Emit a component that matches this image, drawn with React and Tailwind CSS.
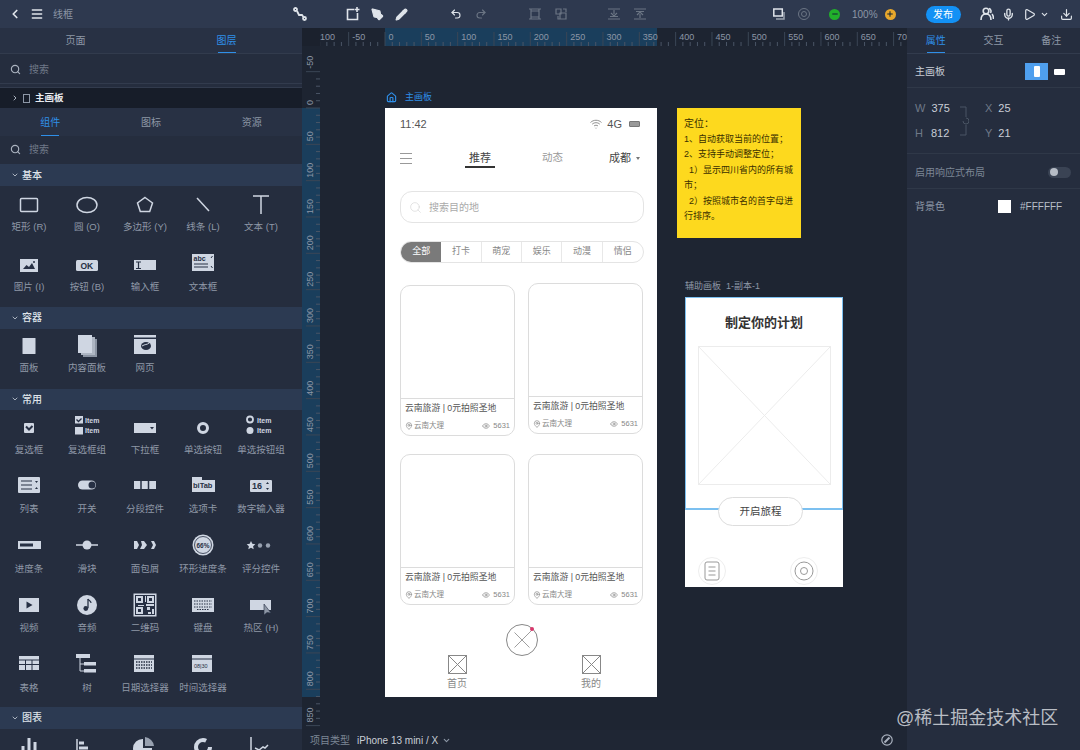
import { ChevronLeft, ChevronDown, ChevronRight, Menu, Search, Undo2, Redo2, PenTool, Pencil, Play, Mic, Download, Minus, Plus, Home, MapPin, Eye } from 'lucide-react';

const font = { fontFamily: '"Liberation Sans", "Noto Sans CJK SC", sans-serif' };
const C = '#cfd6e2';
const D = '#273044';
const rulerText = '#8c96a6';

function G({ children }) {
  return <svg width="36" height="24" viewBox="0 0 36 24" fill="none" className="overflow-visible">{children}</svg>;
}
const T = ({ x, y, s = 7, c = D, children }) => (
  <text x={x} y={y} fontSize={s} fontWeight="700" fill={c} fontFamily="Liberation Sans">{children}</text>
);

const icons = {
  rect: <G><rect x="9.500" y="5.500" width="17" height="13" rx="1" stroke={C} strokeWidth="1.500" /></G>,
  oval: <G><ellipse cx="18" cy="12" rx="10" ry="7.500" stroke={C} strokeWidth="1.500" /></G>,
  poly: <G><path d="M18 4.500l7.500 5.500-2.800 8.500h-9.400L10.500 10z" stroke={C} strokeWidth="1.500" /></G>,
  line: <G><path d="M12 5l12 13" stroke={C} strokeWidth="1.500" /></G>,
  text: <G><path d="M10 3h16M18 3v18" stroke={C} strokeWidth="1.500" /></G>,
  img: <G><rect x="9" y="6" width="18" height="13" fill={C} /><path d="M12 16l3.500-4 2.500 2 3-4 3 6z" fill={D} /><circle cx="23" cy="9" r="1" fill={D} /></G>,
  btn: <G><rect x="7" y="7" width="22" height="11" rx="1.500" fill={C} /><T x="11.500" y="15.500" s={8.500}>OK</T></G>,
  input: <G><rect x="7" y="7" width="22" height="10" fill={C} /><path d="M9 9h5M9 15.500h5M11.500 9v6.500" stroke={D} strokeWidth="1.200" /></G>,
  area: <G><rect x="7" y="1" width="22" height="17" fill={C} /><T x="8.500" y="8" s={7}>abc</T><path d="M9 11h14M9 14h14" stroke={D} /><path d="M26 5l1.500-2M26 13l1.500 2" stroke={D} /></G>,
  panel: <G><rect x="11.500" y="4" width="13" height="16" rx="0.500" fill={C} /></G>,
  content: <G><rect x="14" y="5" width="14" height="18" fill="#8b94a3" /><rect x="12" y="3" width="14" height="18" fill="#aeb6c3" /><rect x="9" y="1" width="14" height="18" fill={C} /></G>,
  web: <G><rect x="7" y="1" width="22" height="19" fill={C} /><rect x="7" y="3.500" width="22" height="1.500" fill={D} /><ellipse cx="19" cy="12" rx="5" ry="4" fill={D} /><path d="M15 12c3-2 5-1 7-3" stroke={C} /></G>,
  check: <G><rect x="13" y="7" width="10" height="10" rx="1" fill={C} /><path d="M15 10.500l3 3 3.500-3.500" stroke={D} strokeWidth="2" /></G>,
  checks: <G><rect x="6" y="0" width="8" height="7.500" fill={C} /><path d="M7.500 3.500l2 2 3-3" stroke={D} strokeWidth="1.300" /><T x="16" y="6.500" s={7} c={C}>Item</T><rect x="6" y="11" width="8" height="7.500" fill={C} /><T x="16" y="17" s={7} c={C}>Item</T></G>,
  drop: <G><rect x="7" y="7" width="22" height="10" fill={C} /><path d="M23 11h4l-2 2.500z" fill={D} /></G>,
  radio: <G><circle cx="18" cy="12" r="4.500" stroke={C} strokeWidth="3" /></G>,
  radios: <G><circle cx="7" cy="3.500" r="3" stroke={C} strokeWidth="1.800" /><T x="14" y="6.500" s={7} c={C}>Item</T><circle cx="7" cy="14.500" r="3.500" fill={C} /><T x="14" y="17" s={7} c={C}>Item</T></G>,
  list: <G><rect x="7" y="2" width="22" height="16" rx="1" fill={C} /><path d="M10 6h11M10 10h11M10 14h11" stroke={D} /><path d="M24 6h3l-1.500 2zM24 14h3l-1.500-2z" fill={D} /></G>,
  sw: <G><rect x="9" y="5.500" width="18" height="9" rx="4.500" fill={C} /><circle cx="23" cy="10" r="3.500" fill={D} /></G>,
  seg: <G><rect x="7" y="6" width="22" height="8" fill={C} /><path d="M14 6v8M21.500 6v8" stroke={D} strokeWidth="1.500" /></G>,
  tab: <G><rect x="7" y="5" width="23" height="12" fill={C} /><rect x="7" y="2" width="10" height="3" fill={C} /><T x="8" y="13" s={7.500}>biTab</T></G>,
  num: <G><rect x="7" y="5" width="22" height="12" rx="1" fill={C} /><T x="9" y="14" s={9}>16</T><path d="M23 9l1.500-2 1.500 2zM23 13l1.500 2 1.500-2z" fill={D} /></G>,
  prog: <G><rect x="7" y="6" width="23" height="8" fill={C} /><rect x="9" y="8.500" width="13" height="3" fill={D} /></G>,
  slider: <G><path d="M7 10h22" stroke={C} strokeWidth="1.500" /><circle cx="18" cy="10" r="4.500" fill={C} /></G>,
  crumb: <G><path d="M7 6h3l2 4-2 4H7zM14 6h3l3 4-3 4h-4l2-4zM24 6h3l2 4-2 4h-3l2-4z" fill={C} /></G>,
  ring: <G><circle cx="18" cy="10" r="10.500" fill={C} /><circle cx="18" cy="10" r="8.500" stroke={D} strokeWidth="0.800" /><T x="11.500" y="12.500" s={6.500}>66%</T></G>,
  rate: <G><path d="M8 6l1.300 2.800 3 .4-2.200 2 .6 3-2.700-1.500-2.700 1.500.6-3-2.200-2 3-.4z" fill={C} /><circle cx="17" cy="10.500" r="2.200" fill="#98a1b0" /><circle cx="25" cy="10.500" r="2.200" fill="#98a1b0" /></G>,
  video: <G><rect x="8" y="4" width="20" height="14" fill={C} /><path d="M15.500 7.500v7l6-3.500z" fill={D} /></G>,
  audio: <G><circle cx="18" cy="11" r="10" fill={C} /><path d="M19 5v9" stroke={D} strokeWidth="1.300" /><circle cx="16.800" cy="14.500" r="2.400" fill={D} /><path d="M19 5c1 2 3 2 3 4" stroke={D} strokeWidth="1.200" /></G>,
  qr: <G><rect x="6.500" y="-0.500" width="23" height="23" fill={C} /><rect x="8" y="1" width="20" height="20" fill={D} /><path d="M9 2h7v7H9zM20 2h7v7h-7zM9 13h7v7H9zM20 13h3v3h-3zM25 15h2v5h-2zM21 18h3v2h-3zM18 2h1v6h-1zM11 11h6v1h-6zM19 10h8v2h-8z" fill={C} /><path d="M11 4h3v3h-3zM22 4h3v3h-3zM11 15h3v3h-3z" fill={D} /></G>,
  kbd: <G><rect x="7" y="4" width="22" height="14" fill={C} /><path d="M9 7h18M9 10h18M9 13h18M12 15.500h12" stroke={D} strokeWidth="1.200" strokeDasharray="1.500 1" /></G>,
  hot: <G><rect x="7" y="6" width="21" height="10" fill={C} /><path d="M21 10l0 11 3-2.500 4 .5z" fill="#8e97a6" stroke={D} strokeWidth="0.600" /></G>,
  table: <G><rect x="8" y="2" width="20" height="14" fill={C} /><path d="M8 6h20M8 10.500h20M14.500 6v10M21 6v10" stroke={D} /></G>,
  tree: <G><rect x="7" y="0" width="14" height="4" fill={C} /><rect x="15" y="8" width="12" height="3.500" fill={C} /><rect x="15" y="15" width="12" height="3.500" fill={C} /><path d="M11 4v13h4M11 10h4" stroke={C} /></G>,
  date: <G><rect x="7" y="1" width="20" height="17" fill={C} /><path d="M7 5h20" stroke={D} /><path d="M9 8h16M9 11h16M9 14h16" stroke={D} strokeWidth="1.500" strokeDasharray="1.500 1" /></G>,
  time: <G><rect x="7" y="1" width="20" height="17" fill={C} /><path d="M7 5h20" stroke={D} /><text x="9" y="14" fontSize="5.500" fill={D} fontFamily="Liberation Sans">08|30</text></G>,
  bars: <G><path d="M12 24V12M18 24V4M24 24V8" stroke={C} strokeWidth="3" /></G>,
  hbars: <G><path d="M8 5v19" stroke={C} strokeWidth="1.500" /><path d="M10 9h5M10 14h9" stroke={C} strokeWidth="3" /></G>,
  pie: <G><path d="M16 5v9h9a9.500 9.500 0 1 1-9-9z" fill={C} /><path d="M18 3a10 10 0 0 1 9 9h-9z" fill="#98a1b0" /></G>,
  donut: <G><circle cx="18" cy="13" r="7" stroke={C} strokeWidth="4" strokeDasharray="36 8" /></G>,
  chart: <G><path d="M8 3v21" stroke={C} strokeWidth="1.500" /><path d="M12 14l4 2 4-3 2 1 3-3" stroke={C} strokeWidth="1.500" /></G>,
};

const sections = [
  { title: '基本', head: 'h-[22px]', body: 'pt-[7px] pb-[13px]', items: [['rect', '矩形 (R)'], ['oval', '圆 (O)'], ['poly', '多边形 (Y)'], ['line', '线条 (L)'], ['text', '文本 (T)'], ['img', '图片 (I)'], ['btn', '按钮 (B)'], ['input', '输入框'], ['area', '文本框']] },
  { title: '容器', head: 'h-[22px]', body: 'pt-[5px] pb-[14px]', items: [['panel', '面板'], ['content', '内容面板'], ['web', '网页']] },
  { title: '常用', head: 'h-[21px]', body: 'pt-[6px] pb-[12px]', items: [['check', '复选框'], ['checks', '复选框组'], ['drop', '下拉框'], ['radio', '单选按钮'], ['radios', '单选按钮组'], ['list', '列表'], ['sw', '开关'], ['seg', '分段控件'], ['tab', '选项卡'], ['num', '数字输入器'], ['prog', '进度条'], ['slider', '滑块'], ['crumb', '面包屑'], ['ring', '环形进度条'], ['rate', '评分控件'], ['video', '视频'], ['audio', '音频'], ['qr', '二维码'], ['kbd', '键盘'], ['hot', '热区 (H)'], ['table', '表格'], ['tree', '树'], ['date', '日期选择器'], ['time', '时间选择器']] },
  { title: '图表', head: 'h-[22px]', body: 'pt-[5px]', items: [['bars', ''], ['hbars', ''], ['pie', ''], ['donut', ''], ['chart', '']] },
];

function Tab({ label, active }) {
  return (
    <div className={active ? 'relative flex h-full items-center justify-center text-[10px] text-[#2f8fe8]' : 'relative flex h-full items-center justify-center text-[10px] text-[#8d97a6]'}>
      {label}
      {active && <span className="absolute bottom-0 left-1/2 h-px w-[18px] -translate-x-1/2 bg-[#2f8fe8]" />}
    </div>
  );
}

function SearchRow({ label, className }) {
  return (
    <div className={`flex items-center gap-[8px] pl-[10px] text-[10px] text-[#6f7988] ${className}`}>
      <Search size={11} strokeWidth={2.500} className="text-[#aab2bf]" />
      {label}
    </div>
  );
}

function Sidebar() {
  return (
    <aside className="flex w-[302px] shrink-0 flex-col overflow-hidden bg-[#252d3e]">
      <div className="grid h-[26px] shrink-0 grid-cols-2 border-b border-[#323b4d] bg-[#283144]">
        <Tab label="页面" />
        <Tab label="图层" active />
      </div>
      <SearchRow label="搜索" className="h-[29px] shrink-0 pt-px" />
      <div className="h-[5px] shrink-0 border-y border-[#323b4d]" />
      <div className="flex h-[20px] shrink-0 items-center gap-[4px] bg-[#171d29] pl-[11px] text-[9.500px] font-bold text-[#e8ebf0]">
        <ChevronRight size={8} strokeWidth={3} className="text-[#aab2bf]" />
        <span className="h-[9px] w-[7px] border border-[#8d97a6]" />
        <span className="ml-[1px]">主画板</span>
      </div>
      <div className="grid h-[28px] shrink-0 grid-cols-3 bg-[#283144]">
        <Tab label="组件" active />
        <Tab label="图标" />
        <Tab label="资源" />
      </div>
      <SearchRow label="搜索" className="h-[28px] shrink-0 pb-[2px]" />
      {sections.map((s) => (
        <section key={s.title} className="shrink-0">
          <div className={`flex items-center gap-[3px] bg-[#2c3a52] pl-[11px] text-[10px] font-medium text-[#dfe4ea] ${s.head}`}>
            <ChevronDown size={8} strokeWidth={3} className="text-[#aab2bf]" />
            {s.title}
          </div>
          <div className={`grid w-[290px] grid-cols-5 gap-y-[18.500px] ${s.body}`}>
            {s.items.map(([k, label]) => (
              <div key={k} className="flex flex-col items-center gap-[3px]">
                <div className="flex h-[24px] items-center justify-center">{icons[k]}</div>
                <span className="h-[14px] whitespace-nowrap text-[9.500px] leading-[14px] text-[#8f98a7]">{label}</span>
              </div>
            ))}
          </div>
        </section>
      ))}
    </aside>
  );
}

function TopRuler() {
  const step = 36.33;
  const ticks = [];
  for (let i = -2; i < 15; i++) ticks.push(i);
  return (
    <svg width="587" height="18" className="block">
      <rect x="65" width="272" height="18" fill="#1a3e5c" />
      {ticks.map((i) => {
        const x = 65 + i * step;
        const label = i === -2 ? '100' : i === 14 ? '70' : i * 50;
        return (
          <g key={i}>
            <path d={`M${x} 4V18`} stroke="#3b4656" />
            {[1, 2, 3, 4].map((m) => <path key={m} d={`M${x + (m * step) / 5} 14V18`} stroke="#4a5566" />)}
            <text x={i === -2 ? 0 : x + 3.500} y="12" fontSize="9" fill={rulerText} fontFamily="Liberation Sans">{label}</text>
          </g>
        );
      })}
    </svg>
  );
}

function LeftRuler() {
  const step = 36.33;
  const ticks = [];
  for (let i = -1; i < 18; i++) ticks.push(i);
  return (
    <svg width="18" height="684" className="block shrink-0">
      <rect y="62" width="18" height="589" fill="#1a3e5c" />
      {ticks.map((i) => {
        const y = 62 + i * step;
        return (
          <g key={i}>
            <path d={`M4 ${y}H18`} stroke="#3b4656" />
            {[1, 2, 3, 4].map((m) => <path key={m} d={`M14 ${y + (m * step) / 5}H18`} stroke="#4a5566" />)}
            <text transform={`translate(11 ${y - 3}) rotate(-90)`} fontSize="9" fill={rulerText} fontFamily="Liberation Sans">{i * 50}</text>
          </g>
        );
      })}
    </svg>
  );
}

function XBox({ className }) {
  return (
    <svg viewBox="0 0 20 20" className={className} preserveAspectRatio="none" fill="none">
      <rect x="0" y="0" width="20" height="20" stroke="currentColor" strokeWidth="2" vectorEffect="non-scaling-stroke" />
      <path d="M0 0L20 20M20 0L0 20" stroke="currentColor" vectorEffect="non-scaling-stroke" />
    </svg>
  );
}

function Card({ className }) {
  return (
    <div className={`flex h-[151px] flex-col overflow-hidden rounded-[10px] border border-[#dcdcdc] bg-white ${className}`}>
      <div className="h-[113px] shrink-0 border-b border-[#dcdcdc]" />
      <div className="whitespace-nowrap px-[4px] pt-[2px] text-[8.800px] leading-[14px] text-[#555]">云南旅游 | 0元拍照圣地</div>
      <div className="flex items-center justify-between px-[4px] pt-[6px] text-[7.500px] leading-[10px] text-[#888]">
        <span className="flex items-center gap-[1px]"><MapPin size={8} />云南大理</span>
        <span className="flex items-center gap-[3px]"><Eye size={8} />5631</span>
      </div>
    </div>
  );
}

function Phone() {
  return (
    <div className="absolute left-[65px] top-[62px] flex h-[589px] w-[272px] flex-col bg-white">
      <div className="flex h-[32px] items-center justify-between pl-[15px] pr-[17px] text-[11px] text-[#555]">
        <span>11:42</span>
        <span className="flex items-center gap-[5px]">
          <svg width="12" height="10" viewBox="0 0 12 10" fill="none" stroke="#777" strokeWidth="0.800"><path d="M0.500 3.500c3-3 8-3 11 0M2.200 5.200c2-2 5.600-2 7.600 0M4 7c1-1 3-1 4 0M5.500 8.800l.5.500.5-.5" /></svg>
          4G
          <span className="ml-[2px] h-[6px] w-[11px] rounded-[1px] border border-[#777] bg-[#999]" />
        </span>
      </div>
      <div className="flex h-[36px] items-center pl-[15px] pr-[19px] text-[11px]">
        <span className="flex w-[12px] flex-col gap-[4px]">
          <i className="h-px bg-[#999]" /><i className="h-px bg-[#999]" /><i className="h-px bg-[#999]" />
        </span>
        <span className="relative ml-[57px] text-[#444]">推荐<i className="absolute -bottom-[2px] -left-[4px] h-[2px] w-[30px] bg-[#333]" /></span>
        <span className="ml-[51px] text-[10.500px] text-[#999]">动态</span>
        <span className="ml-auto flex items-center gap-[5px] text-[#444]">成都<span className="-mr-[2px] h-0 w-0 border-x-[2.500px] border-t-[3px] border-x-transparent border-t-[#777]" /></span>
      </div>
      <div className="ml-[15px] mt-[15px] flex h-[32px] w-[244px] items-center gap-[7px] rounded-[12px] border border-[#e4e4e4] pl-[8px] text-[10px] text-[#aaa]">
        <Search size={13} strokeWidth={1} className="text-[#ccc]" />
        搜索目的地
      </div>
      <div className="ml-[15px] mt-[18px] grid h-[22px] w-[244px] grid-cols-6 overflow-hidden rounded-full border border-[#e4e4e4] text-[9px] text-[#888]">
        <span className="flex items-center justify-center bg-[#7a7a7a] text-white">全部</span>
        {['打卡', '萌宠', '娱乐', '动漫', '情侣'].map((t, i) => (
          <span key={t} className={i < 4 ? 'flex items-center justify-center border-r border-[#e8e8e8]' : 'flex items-center justify-center'}>{t}</span>
        ))}
      </div>
      <div className="ml-[15px] mt-[20px] grid w-[243px] grid-cols-[115px_115px] gap-x-[13px] gap-y-[18px]">
        <Card className="mt-[2px]" />
        <Card />
        <Card />
        <Card />
      </div>
      <div className="relative flex-1">
        <div className="absolute left-[121px] top-[19px] h-[32px] w-[32px] rounded-full border border-[#888]">
          <svg viewBox="0 0 32 32" className="h-full w-full" fill="none" stroke="#999"><path d="M8 8l16 16M27 5L8 24" /></svg>
          <i className="absolute right-[3px] top-[2px] h-[4px] w-[4px] rounded-full bg-[#d8386c]" />
        </div>
        <div className="absolute left-[57px] top-[50px] flex w-[30px] flex-col items-center gap-[2px] text-[10px] text-[#888]"><XBox className="h-[19px] w-[19px] text-[#888]" />首页</div>
        <div className="absolute left-[191px] top-[50px] flex w-[30px] flex-col items-center gap-[2px] text-[10px] text-[#888]"><XBox className="h-[19px] w-[19px] text-[#888]" />我的</div>
      </div>
    </div>
  );
}

function Note() {
  return (
    <div className="absolute left-[357px] top-[62px] h-[130px] w-[124px] bg-[#fdd91e] pl-[7px] pr-[3px] pt-[8px] text-[9px] leading-[15.500px] text-[#3a3000]">
      <p className="text-[10px]">定位：</p>
      <p>1、自动获取当前的位置；</p>
      <p>2、支持手动调整定位；</p>
      <p>&nbsp;&nbsp;1）显示四川省内的所有城市；</p>
      <p>&nbsp;&nbsp;2）按照城市名的首字母进行排序。</p>
    </div>
  );
}

function Plan() {
  return (
    <div className="absolute left-[365px] top-[251px] flex h-[290px] w-[158px] flex-col items-center bg-white">
      <div className="absolute left-0 top-0 h-[213px] w-full border border-b-2 border-[#7cc0f0]" />
      <h2 className="mt-[17px] text-[13px] font-bold leading-[18px] text-[#333]">制定你的计划</h2>
      <XBox className="relative mt-[14px] h-[139px] w-[133px] text-[#ececec]" />
      <div className="relative mt-[12px] flex h-[29px] w-[85px] items-center justify-center self-start ml-[33px] rounded-full border border-[#ddd] bg-white text-[10.500px] text-[#444]">开启旅程</div>
      <div className="ml-[13px] mt-[31px] flex w-[120px] justify-between self-start">
        <span className="flex h-[28px] w-[28px] items-center justify-center rounded-full border border-[#eee]">
          <svg width="16" height="20" viewBox="0 0 16 20" fill="none" stroke="#999"><rect x="1" y="1" width="14" height="18" rx="2" /><path d="M4.500 6h7M4.500 10h7M4.500 14h7" /></svg>
        </span>
        <span className="flex h-[28px] w-[28px] items-center justify-center rounded-full border border-[#eee]">
          <svg width="20" height="20" viewBox="0 0 20 20" fill="none" stroke="#999"><circle cx="10" cy="10" r="9" /><circle cx="10" cy="10" r="3.500" /></svg>
        </span>
      </div>
    </div>
  );
}

function Canvas() {
  return (
    <div className="relative flex-1 overflow-hidden bg-[#1e2532]">
      <div className="absolute left-[66px] top-[45px] flex items-center gap-[8px] text-[9px] text-[#2f8fe8]">
        <Home size={11} strokeWidth={2.500} />
        主画板
      </div>
      <Phone />
      <Note />
      <div className="absolute left-[365px] top-[234px] text-[9px] text-[#8d97a6]">辅助画板&nbsp;&nbsp;1-副本-1</div>
      <Plan />
    </div>
  );
}

function RightPanel() {
  return (
    <aside className="flex w-[173px] shrink-0 flex-col bg-[#252d3e] text-[10px]">
      <div className="grid h-[26px] shrink-0 grid-cols-3 border-b border-[#323b4d]">
        <Tab label="属性" active />
        <Tab label="交互" />
        <Tab label="备注" />
      </div>
      <div className="flex h-[34px] items-center justify-between border-b border-[#2f3848] pl-[8px] pr-[13px] pt-[2px] text-[#c9ced6]">
        主画板
        <span className="flex items-center gap-[6px]">
          <span className="flex h-[17px] w-[23px] items-center justify-center bg-[#4f9fee]"><i className="h-[11px] w-[6px] rounded-[1px] bg-white" /></span>
          <i className="mr-[2px] h-[6px] w-[11px] rounded-[1px] bg-white" />
        </span>
      </div>
      <div className="relative grid h-[66px] grid-cols-[70px_1fr] content-center gap-y-[11px] border-b border-[#2f3848] pl-[8px] text-[11px] leading-[14px] text-[#c9ced6]">
        <span><span className="mr-[6px] text-[#6f7988]">W</span>375</span>
        <span><span className="mr-[6px] text-[#6f7988]">X</span>25</span>
        <span><span className="mr-[8px] text-[#6f7988]">H</span>812</span>
        <span><span className="mr-[6px] text-[#6f7988]">Y</span>21</span>
        <svg width="10" height="30" viewBox="0 0 10 30" fill="none" stroke="#4a5464" className="absolute left-[52px] top-[18px]"><path d="M1 1h6v10M7 19v10H1M4 15a3 3 0 1 0 3-3" /></svg>
      </div>
      <div className="flex h-[35px] items-center justify-between border-b border-[#2f3848] pl-[8px] pr-[9px] pt-[2px] text-[#7c8695]">
        启用响应式布局
        <span className="flex h-[11px] w-[23px] items-center rounded-full bg-[#3a4354] pl-[2px]"><i className="h-[8px] w-[8px] rounded-full bg-[#b6bcc6]" /></span>
      </div>
      <div className="flex h-[33px] items-center pl-[8px] pt-[2px] text-[#8d97a6]">
        背景色
        <span className="ml-[53px] h-[13px] w-[13px] bg-white" />
        <span className="ml-[9px] text-[#b8bec8]">#FFFFFF</span>
      </div>
    </aside>
  );
}

function TopBar() {
  const dim = '#6b7584';
  return (
    <header className="flex h-[28px] shrink-0 items-center bg-[#2e394f] text-[#dfe4ea]">
      <div className="flex w-[302px] shrink-0 items-center pl-[8px]">
        <ChevronLeft size={14} strokeWidth={3} />
        <Menu size={14} strokeWidth={2.500} className="ml-[8px]" />
        <span className="ml-[9px] text-[10px] text-[#8d97a6]">线框</span>
        <svg width="14" height="14" viewBox="0 0 14 14" fill="none" stroke="currentColor" strokeWidth="1.800" className="ml-auto mr-[-5px]"><circle cx="2.500" cy="2.500" r="1.500" /><circle cx="11.500" cy="11.500" r="1.500" /><path d="M4 4l2 4h3l1.500 2" /></svg>
      </div>
      <div className="ml-[44px] flex items-center gap-[11px]">
        <svg width="14" height="14" viewBox="0 0 14 14" fill="none" stroke="currentColor" strokeWidth="1.600"><path d="M8 2.500H1.500v10h10V6M11 0v5M8.500 2.500h5" /></svg>
        <PenTool size={13} strokeWidth={2} fill="currentColor" stroke="currentColor" />
        <Pencil size={13} strokeWidth={2} fill="currentColor" />
      </div>
      <div className="ml-[42px] flex items-center gap-[13px]">
        <Undo2 size={12} strokeWidth={2.200} />
        <Redo2 size={12} strokeWidth={2.200} color={dim} />
      </div>
      <div className="ml-[42px] flex items-center gap-[14px]" style={{ color: dim }}>
        <svg width="12" height="12" viewBox="0 0 12 12" fill="none" stroke="currentColor" strokeWidth="1.200"><path d="M0 1h12M0 11h12M2 1v10M10 1v10M2 3h8v6H2z" /></svg>
        <svg width="12" height="12" viewBox="0 0 12 12" fill="none" stroke="currentColor" strokeWidth="1.200"><path d="M1 1h5v5H1zM5 5h6v6H5zM3 8v3h2M8 1h3v3" /></svg>
      </div>
      <div className="ml-[41px] flex items-center gap-[14px]" style={{ color: dim }}>
        <svg width="12" height="12" viewBox="0 0 12 12" fill="none" stroke="currentColor" strokeWidth="1.200"><path d="M0 1h12M0 11h12M6 2v4M3 5l3 3 3-3M2 8.500h8" /></svg>
        <svg width="12" height="12" viewBox="0 0 12 12" fill="none" stroke="currentColor" strokeWidth="1.200"><path d="M0 1h12M0 11h12M6 10V6M3 7l3-3 3 3M2 3.500h8" /></svg>
      </div>
      <div className="ml-[127px] flex items-center gap-[13px]">
        <svg width="12" height="12" viewBox="0 0 12 12" fill="none" stroke="currentColor" strokeWidth="1.500"><rect x="0.800" y="1" width="8.500" height="7" /><path d="M11 4v7H3" stroke="#9aa3b0" /></svg>
        <svg width="12" height="12" viewBox="0 0 12 12" fill="none" stroke={dim}><circle cx="6" cy="6" r="5.500" /><circle cx="6" cy="6" r="2.500" /></svg>
      </div>
      <span className="ml-[19px] flex h-[11px] w-[11px] items-center justify-center rounded-full bg-[#21b02b] text-[#123]"><Minus size={8} strokeWidth={3} /></span>
      <span className="ml-[12px] text-[10px] text-[#8d97a6]">100%</span>
      <span className="ml-[7px] flex h-[11px] w-[11px] items-center justify-center rounded-full bg-[#e8a82c] text-[#123]"><Plus size={8} strokeWidth={3} /></span>
      <span className="ml-[30px] flex h-[17px] w-[35px] items-center justify-center rounded-full bg-[#1391f5] text-[10px] text-white">发布</span>
      <div className="ml-[19px] flex items-center">
        <svg width="14" height="14" viewBox="0 0 14 14" fill="none" stroke="currentColor" strokeWidth="1.600"><circle cx="6" cy="4" r="2.800" /><path d="M1 13c0-4 2-6 5-6s5 2 5 6M9 1.500c2 .5 2.500 3 1.500 4.500M12 7c1 1 1.500 3 1.500 5" /></svg>
        <Mic size={13} strokeWidth={2.500} className="ml-[8px]" />
        <Play size={13} strokeWidth={2.200} className="ml-[8px]" />
        <ChevronDown size={9} strokeWidth={3} className="ml-[4px]" />
        <Download size={13} strokeWidth={2.200} className="ml-[11px]" />
      </div>
    </header>
  );
}

export default function App() {
  return (
    <div className="relative flex h-[750px] w-[1080px] flex-col overflow-hidden bg-[#1e2532]" style={font}>
      <TopBar />
      <div className="flex min-h-0 flex-1">
        <Sidebar />
        <main className="flex min-w-0 flex-1 flex-col">
          <div className="flex h-[18px] shrink-0 bg-[#1d2431]">
            <div className="w-[18px] shrink-0 bg-[#1b212d]" />
            <TopRuler />
          </div>
          <div className="flex min-h-0 flex-1 bg-[#1e2532]">
            <div className="h-[684px] w-[18px] shrink-0 bg-[#1d2431]"><LeftRuler /></div>
            <Canvas />
          </div>
          <div className="flex h-[20px] shrink-0 items-center bg-[#1f2634] pl-[8px] pr-[14px] text-[10px] text-[#c9ced6]">
            <span className="text-[#7c8695]">项目类型</span>
            <span className="ml-[7px]">iPhone 13 mini / X</span>
            <ChevronDown size={9} strokeWidth={3} className="ml-[4px] text-[#8d97a6]" />
            <svg width="12" height="12" viewBox="0 0 12 12" fill="none" stroke="#aab2bf" className="ml-auto"><circle cx="6" cy="6" r="5.200" strokeWidth="1.200" /><path d="M3.500 8.500l5-5" strokeWidth="2" /></svg>
          </div>
        </main>
        <RightPanel />
      </div>
      <div className="absolute left-[896px] top-[705px] text-[18px] text-[#b9bdc4]">@稀土掘金技术社区</div>
    </div>
  );
}
